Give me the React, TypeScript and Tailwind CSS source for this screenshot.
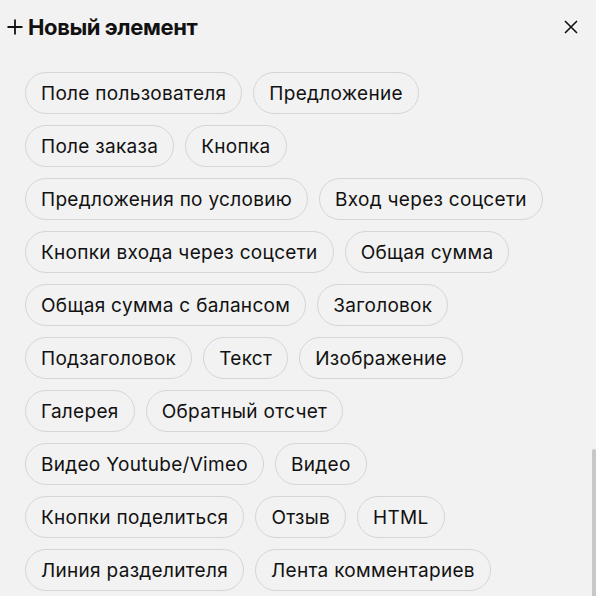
const rows: string[][] = [
  ["Поле пользователя", "Предложение"],
  ["Поле заказа", "Кнопка"],
  ["Предложения по условию", "Вход через соцсети"],
  ["Кнопки входа через соцсети", "Общая сумма"],
  ["Общая сумма с балансом", "Заголовок"],
  ["Подзаголовок", "Текст", "Изображение"],
  ["Галерея", "Обратный отсчет"],
  ["Видео Youtube/Vimeo", "Видео"],
  ["Кнопки поделиться", "Отзыв", "HTML"],
  ["Линия разделителя", "Лента комментариев"],
];

const App = () => {
  return (
    <div
      className="relative w-[596px] h-[596px] overflow-hidden bg-[#f2f2f2] text-[#111111]"
      style={{ fontFamily: "Inter, 'Noto Sans', sans-serif" }}
    >
      {/* Header */}
      <div className="flex items-center justify-between pl-[7px] pr-[18px] h-[54px]">
        <div className="flex items-center gap-[5px]">
          <svg width="16" height="16" viewBox="0 0 16 16" className="shrink-0">
            <path d="M8 0.5V15.5M0.5 8H15.5" stroke="#111" strokeWidth="1.8" />
          </svg>
          <h2 className="text-[22px] font-bold leading-none tracking-[-0.4px]">Новый элемент</h2>
        </div>
        <button className="w-[14px] h-[14px]">
          <svg width="14" height="14" viewBox="0 0 14 14">
            <path d="M1 1L13 13M13 1L1 13" stroke="#111" strokeWidth="1.6" />
          </svg>
        </button>
      </div>

      {/* Element chips */}
      <div className="flex flex-col gap-[11px] pl-[25px] pt-[18px]">
        {rows.map((row, i) => (
          <div key={i} className="flex gap-[11px]">
            {row.map((label) => (
              <button
                key={label}
                className="h-[42px] px-[15px] rounded-full border border-[#d6d6d6] text-[19px] tracking-[0.3px] leading-none whitespace-nowrap"
              >
                {label}
              </button>
            ))}
          </div>
        ))}
      </div>

      {/* Scrollbar */}
      <div className="absolute right-0 top-[449px] w-[4px] h-[160px] rounded-t-[2px] bg-[#c8c8c8]" />
    </div>
  );
};

export default App;
